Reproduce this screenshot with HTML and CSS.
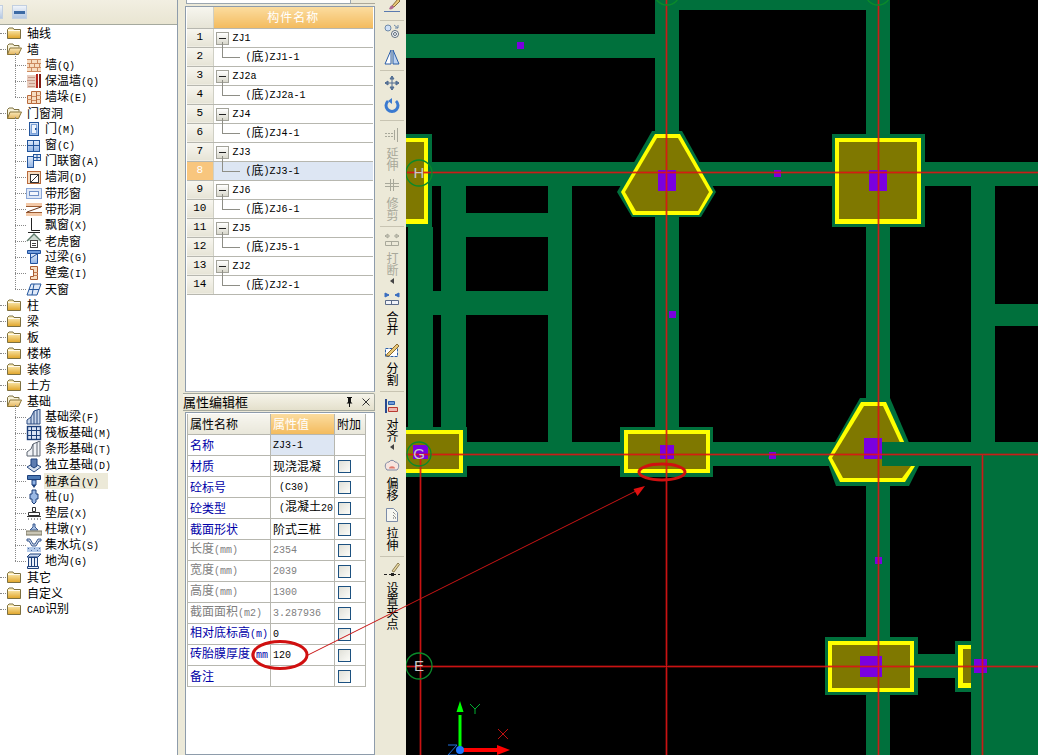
FILE: index.html
```html
<!DOCTYPE html>
<html lang="zh">
<head>
<meta charset="utf-8">
<title>属性编辑框</title>
<link rel="stylesheet" href="styles.css">
</head>
<body>
<svg class="defs" width="0" height="0" aria-hidden="true">
  <defs>
    <linearGradient id="gold" x1="0" y1="0" x2="0" y2="1"><stop offset="0" stop-color="#fff6c8"/><stop offset="1" stop-color="#e0a428"/></linearGradient>
    <linearGradient id="tan" x1="0" y1="0" x2="0" y2="1"><stop offset="0" stop-color="#fbe9b8"/><stop offset="1" stop-color="#e3b560"/></linearGradient>
    <linearGradient id="blu" x1="0" y1="0" x2="0" y2="1"><stop offset="0" stop-color="#e2ecfa"/><stop offset="1" stop-color="#8fb2e4"/></linearGradient>
    <symbol id="fc" viewBox="0 0 16 16"><path d="M1.500 4.500 3 3h4l1 1.500h6.500v9h-13z" fill="url(#gold)" stroke="#7d7040"/><path d="M2 5.500h12" stroke="#fff" stroke-width=".8"/></symbol>
    <symbol id="fo" viewBox="0 0 16 16"><path d="M1.500 13.500v-9L3 3h4l1 1.500h5v2" fill="#f8f2d8" stroke="#7d7040"/><path d="M1.500 13.500 4 7h11.500l-3 6.500z" fill="url(#tan)" stroke="#8a7538"/></symbol>
    <symbol id="wall" viewBox="0 0 16 16"><rect x="1" y="2" width="14" height="12" fill="#f7dcc0"/><path d="M1 2.500h14M1 6.500h14M1 10.500h14M1 14.500h14M5.500 2v4M11.500 2v4M3.500 6v4M8.500 6v4M13.500 6v4M5.500 10v4M11.500 10v4" stroke="#cc8a60" fill="none"/></symbol>
    <symbol id="ins" viewBox="0 0 16 16"><rect x="1" y="2" width="9" height="13" fill="#e8cdbf"/><path d="M2 4.500h7M1 7.500h8M3 10.500h6M2 13.500h7" stroke="#c89a88"/><rect x="10" y="1" width="2" height="14" fill="#b5231c"/><rect x="13" y="1" width="2" height="14" fill="#7c1c14"/></symbol>
    <symbol id="pier" viewBox="0 0 16 16"><path d="M1.500 6.500h4v8h-4zM5.500 2.500h5v12h-5zM10.500 2.500h4v12h-4z" fill="#f7dcc0" stroke="#b86a3c"/><path d="M1 10.500h5M6 7.500h4M6 11.500h4M11 6.500h4M11 10.500h4" stroke="#cc8a60"/></symbol>
    <symbol id="door" viewBox="0 0 16 16"><rect x="3.500" y="1.500" width="9" height="13" fill="url(#blu)" stroke="#23559c"/><rect x="5.500" y="3.500" width="5" height="9" fill="#eef4fc" stroke="#7ea3d8"/><rect x="9" y="7" width="1.500" height="2" fill="#23559c"/></symbol>
    <symbol id="win" viewBox="0 0 16 16"><rect x="1.500" y="3.500" width="12" height="11" fill="url(#blu)" stroke="#23559c"/><path d="M7.500 3.500v11M1.500 8.500h12" stroke="#23559c"/></symbol>
    <symbol id="dw" viewBox="0 0 16 16"><rect x="1.500" y="3.500" width="6" height="11" fill="url(#blu)" stroke="#23559c"/><rect x="7.500" y="1.500" width="7" height="6" fill="#dfe9f8" stroke="#23559c"/><path d="M11 1.500v6M7.500 4.500h7" stroke="#23559c"/></symbol>
    <symbol id="hole" viewBox="0 0 16 16"><rect x="1.500" y="2.500" width="13" height="12" fill="#f7dcc0" stroke="#b86a3c"/><rect x="4.500" y="5.500" width="8" height="8" fill="#fff" stroke="#333"/><path d="m4.500 13.500 8-8" stroke="#333"/></symbol>
    <symbol id="swin" viewBox="0 0 16 16"><rect x=".5" y="3.500" width="15" height="10" fill="#dfe8f6" stroke="#8aa6d6"/><rect x="3.500" y="6.500" width="9" height="4" fill="#f3f6fc" stroke="#6f8fc6"/></symbol>
    <symbol id="shole" viewBox="0 0 16 16"><rect x="0" y="2" width="16" height="3" fill="#f3c9a8"/><rect x="0" y="12" width="16" height="3" fill="#f3c9a8"/><path d="M0 5.500h16M0 11.500h16" stroke="#9c5a30"/><path d="m1 11 14-5" stroke="#6c3a20"/></symbol>
    <symbol id="bay" viewBox="0 0 16 16"><path d="M5.500 1v12.500H14M2 15.500h12" stroke="#222" fill="none"/></symbol>
    <symbol id="dorm" viewBox="0 0 16 16"><path d="M1 8 8 1l7 7" fill="#cfdbd2" stroke="#5d7a6a" stroke-width="1.300"/><rect x="4.500" y="7.500" width="7" height="7" fill="#fff" stroke="#444"/><path d="M6 10.500h4M6 12.500h4" stroke="#444"/></symbol>
    <symbol id="lint" viewBox="0 0 16 16"><path d="M1.500 1.500h13v3h-13z" fill="#6f9bdc" stroke="#1f4f9c"/><path d="M4.500 4.500h7v10h-7z" fill="url(#blu)" stroke="#1f4f9c"/><path d="m5 9 6-4" stroke="#1f4f9c"/></symbol>
    <symbol id="nich" viewBox="0 0 16 16"><path d="M4.500 1.500h7v13h-7v-3h3v-7h-3z" fill="#f7dcc0" stroke="#a85a30"/><path d="M8 7.500h4M8 10.500h4" stroke="#c47a50"/></symbol>
    <symbol id="skyl" viewBox="0 0 16 16"><path d="M5 3h10l-4 11H1z" fill="#dfe9f8" stroke="#23559c"/><path d="M8 3 6 14M3 8.500h10" stroke="#23559c"/></symbol>
    <symbol id="fb" viewBox="0 0 16 16"><path d="M1 15v-4l4-3 3-6 6-2v15z" fill="#c8d6ea" stroke="#2a4a80"/><path d="M8 2v13M5 8v7M11 1v14" stroke="#2a4a80"/></symbol>
    <symbol id="raft" viewBox="0 0 16 16"><rect x="1.500" y="1.500" width="13" height="13" fill="#d9e4f5" stroke="#1c3f7a" stroke-width="1.400"/><path d="M1 5.500h14M1 10.500h14M5.500 1v14M10.500 1v14" stroke="#1c3f7a"/></symbol>
    <symbol id="sf" viewBox="0 0 16 16"><path d="M1 15v-4l4-3 2-5 7-3v15z" fill="#f1f3f6" stroke="#5c6570"/><path d="M7 3v12M11 1v14" stroke="#5c6570"/></symbol>
    <symbol id="ind" viewBox="0 0 16 16"><path d="M1 10 8 6l7 4-7 5z" fill="#d8e2f0" stroke="#2a4a80"/><path d="M5 2h6v7l-3 2-3-2z" fill="#5d7cb0" stroke="#1c3f7a"/></symbol>
    <symbol id="cap" viewBox="0 0 16 16"><path d="M1.500 2.500h13v4h-13z" fill="#4b79b4" stroke="#1c3f7a"/><path d="M6 7h4v5H6z" fill="#8fb2e4" stroke="#1c3f7a"/><path d="m6 12 2 3 2-3z" fill="#1c3f7a"/></symbol>
    <symbol id="pile" viewBox="0 0 16 16"><path d="M6 1h4v4h2v5h-2v3l-2 2-2-2v-3H4V5h2z" fill="#9ab8e4" stroke="#1c3f7a"/></symbol>
    <symbol id="pad" viewBox="0 0 16 16"><path d="M6.500 2.500h3v4h-3zM2.500 7.500h11v3h-11z" fill="#fff" stroke="#333"/><path d="M1 11.500h14M2 14h1M5 14h1M8 14h1M11 14h1M14 14h1" stroke="#333"/></symbol>
    <symbol id="pb" viewBox="0 0 16 16"><path d="M7 3h2v3l3 3H4l3-3z" fill="#a8c0e4" stroke="#3a5a90"/><rect y="10" width="16" height="4" fill="#c9c5b4" stroke="#77735f"/></symbol>
    <symbol id="pit" viewBox="0 0 16 16"><path d="M1 2h3l3 5h2l3-5h3v2h-2l-3 5H6L3 4H1z" fill="#cbd5e6" stroke="#3a5a90"/><path d="M1 10h14v5H1z" fill="#b5cbea"/><path d="M2 11.500h1M5 13.500h1M8 11.500h1M11 13.500h1M13 11.500h1" stroke="#4a6aa0"/></symbol>
    <symbol id="tr" viewBox="0 0 16 16"><path d="M1 4 4 1h11l-3 3z" fill="#c9d8ee" stroke="#1c3f7a"/><path d="M2.500 4.500h9v9h-9zM1.500 13.500h11v2h-11z" fill="#e8eef8" stroke="#1c3f7a"/><path d="M5.500 4v9M8.500 4v9" stroke="#1c3f7a"/></symbol>
  </defs>
</svg>

<div class="app">
  <aside class="nav">
    <div class="nav-bar"><span class="nav-btn nav-btn-cut"></span><span class="nav-btn"><i></i></span></div>
    <ul class="tree">
      <li class="row root"><svg class="ic"><use href="#fc"/></svg><span>轴线</span></li>
      <li class="row root"><svg class="ic"><use href="#fo"/></svg><span>墙</span></li>
      <li class="kids k3">
        <div class="row kid"><svg class="ic"><use href="#wall"/></svg><span>墙<b>(Q)</b></span></div>
        <div class="row kid"><svg class="ic"><use href="#ins"/></svg><span>保温墙<b>(Q)</b></span></div>
        <div class="row kid"><svg class="ic"><use href="#pier"/></svg><span>墙垛<b>(E)</b></span></div>
      </li>
      <li class="row root"><svg class="ic"><use href="#fo"/></svg><span>门窗洞</span></li>
      <li class="kids k11">
        <div class="row kid"><svg class="ic"><use href="#door"/></svg><span>门<b>(M)</b></span></div>
        <div class="row kid"><svg class="ic"><use href="#win"/></svg><span>窗<b>(C)</b></span></div>
        <div class="row kid"><svg class="ic"><use href="#dw"/></svg><span>门联窗<b>(A)</b></span></div>
        <div class="row kid"><svg class="ic"><use href="#hole"/></svg><span>墙洞<b>(D)</b></span></div>
        <div class="row kid"><svg class="ic"><use href="#swin"/></svg><span>带形窗</span></div>
        <div class="row kid"><svg class="ic"><use href="#shole"/></svg><span>带形洞</span></div>
        <div class="row kid"><svg class="ic"><use href="#bay"/></svg><span>飘窗<b>(X)</b></span></div>
        <div class="row kid"><svg class="ic"><use href="#dorm"/></svg><span>老虎窗</span></div>
        <div class="row kid"><svg class="ic"><use href="#lint"/></svg><span>过梁<b>(G)</b></span></div>
        <div class="row kid"><svg class="ic"><use href="#nich"/></svg><span>壁龛<b>(I)</b></span></div>
        <div class="row kid"><svg class="ic"><use href="#skyl"/></svg><span>天窗</span></div>
      </li>
      <li class="row root"><svg class="ic"><use href="#fc"/></svg><span>柱</span></li>
      <li class="row root"><svg class="ic"><use href="#fc"/></svg><span>梁</span></li>
      <li class="row root"><svg class="ic"><use href="#fc"/></svg><span>板</span></li>
      <li class="row root"><svg class="ic"><use href="#fc"/></svg><span>楼梯</span></li>
      <li class="row root"><svg class="ic"><use href="#fc"/></svg><span>装修</span></li>
      <li class="row root"><svg class="ic"><use href="#fc"/></svg><span>土方</span></li>
      <li class="row root"><svg class="ic"><use href="#fo"/></svg><span>基础</span></li>
      <li class="kids k10">
        <div class="row kid"><svg class="ic"><use href="#fb"/></svg><span>基础梁<b>(F)</b></span></div>
        <div class="row kid"><svg class="ic"><use href="#raft"/></svg><span>筏板基础<b>(M)</b></span></div>
        <div class="row kid"><svg class="ic"><use href="#sf"/></svg><span>条形基础<b>(T)</b></span></div>
        <div class="row kid"><svg class="ic"><use href="#ind"/></svg><span>独立基础<b>(D)</b></span></div>
        <div class="row kid"><svg class="ic"><use href="#cap"/></svg><span class="hot">桩承台<b>(V)</b></span></div>
        <div class="row kid"><svg class="ic"><use href="#pile"/></svg><span>桩<b>(U)</b></span></div>
        <div class="row kid"><svg class="ic"><use href="#pad"/></svg><span>垫层<b>(X)</b></span></div>
        <div class="row kid"><svg class="ic"><use href="#pb"/></svg><span>柱墩<b>(Y)</b></span></div>
        <div class="row kid"><svg class="ic"><use href="#pit"/></svg><span>集水坑<b>(S)</b></span></div>
        <div class="row kid"><svg class="ic"><use href="#tr"/></svg><span>地沟<b>(G)</b></span></div>
      </li>
      <li class="row root"><svg class="ic"><use href="#fc"/></svg><span>其它</span></li>
      <li class="row root"><svg class="ic"><use href="#fc"/></svg><span>自定义</span></li>
      <li class="row root"><svg class="ic"><use href="#fc"/></svg><span><b>CAD</b>识别</span></li>
    </ul>
  </aside>

  <main class="mid">
    <div class="search"><span class="search-box"></span><span class="search-btn"></span></div>
    <section class="list">
      <table class="list-table">
        <thead><tr><th class="no"></th><th class="hd">构件名称</th></tr></thead>
        <tbody>
          <tr><td class="no">1</td><td class="par"><i class="pm"></i><b>ZJ1</b></td></tr>
          <tr><td class="no">2</td><td class="chi"><b>(</b>底<b>)ZJ1-1</b></td></tr>
          <tr><td class="no">3</td><td class="par"><i class="pm"></i><b>ZJ2a</b></td></tr>
          <tr><td class="no">4</td><td class="chi"><b>(</b>底<b>)ZJ2a-1</b></td></tr>
          <tr><td class="no">5</td><td class="par"><i class="pm"></i><b>ZJ4</b></td></tr>
          <tr><td class="no">6</td><td class="chi"><b>(</b>底<b>)ZJ4-1</b></td></tr>
          <tr><td class="no">7</td><td class="par"><i class="pm"></i><b>ZJ3</b></td></tr>
          <tr class="sel"><td class="no">8</td><td class="chi"><b>(</b>底<b>)ZJ3-1</b></td></tr>
          <tr><td class="no">9</td><td class="par"><i class="pm"></i><b>ZJ6</b></td></tr>
          <tr><td class="no">10</td><td class="chi"><b>(</b>底<b>)ZJ6-1</b></td></tr>
          <tr><td class="no">11</td><td class="par"><i class="pm"></i><b>ZJ5</b></td></tr>
          <tr><td class="no">12</td><td class="chi"><b>(</b>底<b>)ZJ5-1</b></td></tr>
          <tr><td class="no">13</td><td class="par"><i class="pm"></i><b>ZJ2</b></td></tr>
          <tr><td class="no">14</td><td class="chi"><b>(</b>底<b>)ZJ2-1</b></td></tr>
        </tbody>
      </table>
    </section>
    <header class="prop-title">
      <span>属性编辑框</span>
      <span class="title-ic"><svg width="12" height="12" viewBox="0 0 12 12"><path d="M4 1h5v1H8v4l1.500 1.500H7V11H6V7.500H3.500L5 6V2H4z" fill="#111"/></svg><svg width="12" height="12" viewBox="0 0 12 12"><path d="m2.500 2.500 7 7m0-7-7 7" stroke="#333" fill="none"/></svg></span>
    </header>
    <section class="props">
      <table class="prop-table">
        <thead><tr><th class="pn">属性名称</th><th class="pv">属性值</th><th class="pa">附加</th></tr></thead>
        <tbody>
          <tr class="blue"><td>名称</td><td class="val cur"><b>ZJ3-1</b></td><td></td></tr>
          <tr class="blue"><td>材质</td><td class="val">现浇混凝</td><td class="chk"><i></i></td></tr>
          <tr class="blue"><td>砼标号</td><td class="val"><b>&nbsp;(C30)</b></td><td class="chk"><i></i></td></tr>
          <tr class="blue"><td>砼类型</td><td class="val"><b>&nbsp;(</b>混凝土<b>20</b></td><td class="chk"><i></i></td></tr>
          <tr class="blue"><td>截面形状</td><td class="val">阶式三桩</td><td class="chk"><i></i></td></tr>
          <tr class="off"><td>长度<b>(mm)</b></td><td class="val"><b>2354</b></td><td class="chk"><i></i></td></tr>
          <tr class="off"><td>宽度<b>(mm)</b></td><td class="val"><b>2039</b></td><td class="chk"><i></i></td></tr>
          <tr class="off"><td>高度<b>(mm)</b></td><td class="val"><b>1300</b></td><td class="chk"><i></i></td></tr>
          <tr class="off"><td>截面面积<b>(m2)</b></td><td class="val"><b>3.287936</b></td><td class="chk"><i></i></td></tr>
          <tr class="blue"><td>相对底标高<b>(m)</b></td><td class="val"><b>0</b></td><td class="chk"><i></i></td></tr>
          <tr class="blue"><td>砖胎膜厚度<b>(mm</b></td><td class="val"><b>120</b></td><td class="chk"><i></i></td></tr>
          <tr class="blue"><td>备注</td><td class="val"></td><td class="chk"><i></i></td></tr>
        </tbody>
      </table>
    </section>
  </main>

  <nav class="tools">
    <div class="tool first"><svg class="ti" viewBox="0 0 16 16"><path d="m8 9 6-7 2 2-6 6z" fill="#e8c878" stroke="#8a6a30"/><path d="M6 10c1-2 3-2 4 0-1 2-3 3-5 2z" fill="#b06a90"/><path d="M0 14.500h16" stroke="#5a7ab0"/></svg></div>
    <hr class="sep">
    <div class="tool"><svg class="ti" viewBox="0 0 16 16"><circle cx="4" cy="5" r="3" fill="#cfe0f6" stroke="#6f8aa8"/><circle cx="11" cy="11" r="3.500" fill="#fff" stroke="#5a6a78"/><circle cx="11" cy="11" r="1.500" fill="none" stroke="#5a6a78"/><path d="m10 2 4 3M14 2v3h-3" stroke="#6f8aa8" fill="none"/></svg></div>
    <div class="tool mt10"><svg class="ti" viewBox="0 0 16 16"><path d="M7 1v14H1z" fill="#fff" stroke="#2a5ea8"/><path d="M9 1v14h6z" fill="#bcd2ee" stroke="#2a5ea8"/></svg></div>
    <hr class="sep">
    <div class="tool mt2"><svg class="ti" viewBox="0 0 16 16"><path d="M8 1v14M1 8h14M8 1 6 4h4zM8 15l-2-3h4zM1 8l3-2v4zM15 8l-3-2v4z" fill="#6f8aa8" stroke="#4e6a90"/></svg></div>
    <div class="tool mt6 mb2"><svg class="ti" viewBox="0 0 16 16"><path d="M4 4a6 6 0 1 0 8 0" fill="none" stroke="#3a7ad0" stroke-width="3"/><path d="M8 1v6l-4-3z" fill="#3a7ad0"/></svg></div>
    <hr class="sep">
    <div class="tool mt4 dis"><svg class="ti" viewBox="0 0 16 16"><path d="M13.500 1v14M10.500 3v10M1 6.500h2M1 9.500h2M4 6.500h2M4 9.500h2M7 6.500h2M7 9.500h2" stroke="#a8a89a" fill="none"/></svg><span class="vt">延伸</span></div>
    <div class="tool mt6 dis"><svg class="ti" viewBox="0 0 16 16"><path d="M6.500 2v12M9.500 2v12M1 6.500h14M1 9.500h14" stroke="#a8a89a" fill="none"/></svg><span class="vt">修剪</span></div>
    <hr class="sep">
    <div class="tool mt3 dis"><svg class="ti" viewBox="0 0 16 16"><path d="M1 4l3-2v4zM1 4h5M15 4l-3-2v4zM15 4h-5M1.500 9.500h13v4h-13zM7.500 9.500v4" stroke="#a8a89a" fill="none"/></svg><span class="vt">打断</span><span class="arrow"></span></div>
    <div class="tool mt7"><svg class="ti" viewBox="0 0 16 16"><path d="M1 2l4 2-4 2zM15 2l-4 2 4 2zM5 4H1M11 4h4" fill="#3a6ec0" stroke="#3a6ec0"/><path d="M1.500 9.500h13v4h-13zM7.500 9.500v4" fill="#f0f2f8" stroke="#5a6a88"/></svg><span class="vt">合并</span></div>
    <div class="tool mt7"><svg class="ti" viewBox="0 0 16 16"><path d="M1.500 6.500h12v8h-12z" fill="#fff" stroke="#2a5ea8" stroke-dasharray="3 1"/><path d="m3 12 10-10 2 2L5 14H2z" fill="#e8c878" stroke="#8a6a30"/></svg><span class="vt">分割</span></div>
    <hr class="sep">
    <div class="tool mt4"><svg class="ti" viewBox="0 0 16 16"><path d="M2 1v14" stroke="#2a4a90" stroke-width="2"/><path d="M4.500 3.500h6v3h-6z" fill="#6f9ad8" stroke="#2a5ea8"/><path d="M4.500 9.500h9v4h-9z" fill="#f0b8b0" stroke="#b83a30"/></svg><span class="vt">对齐</span><span class="arrow"></span></div>
    <div class="tool mt7"><svg class="ti" viewBox="0 0 16 16"><path d="M5 5a3.500 3.500 0 0 1 6 0c4 0 5 5 2 8H3C0 10 1 5 5 5z" fill="#f7e4de" stroke="#808aa4"/><path d="M5 11.500c0-3 6-3 6 0z" fill="#e0786a"/></svg><span class="vt">偏移</span></div>
    <div class="tool mt6"><svg class="ti" viewBox="0 0 16 16"><path d="M2.500 1.500h7l4 4v9h-11z" fill="#f6f6f0" stroke="#7c8ca8"/><path d="m9 5 3 3M9 8l3 3M9 11h3" stroke="#5a5a5a" stroke-dasharray="1 1"/></svg><span class="vt">拉伸</span></div>
    <hr class="sep">
    <div class="tool mt3"><svg class="ti" viewBox="0 0 16 16"><path d="m8 9 6-8 1.500 1.500L10 10z" fill="#e8d8a0" stroke="#8a7a50"/><path d="M0 12.500h3M5 12.500h2M10 12.500h2M14 12.500h2" stroke="#222"/><rect x="7" y="11" width="3" height="3" fill="#222"/></svg><span class="vt">设置夹点</span></div>
  </nav>

  <div class="canvas">
    <svg class="draw" viewBox="406 0 632 755" width="632" height="755">
      <g class="beam">
        <rect x="406" y="34" width="249" height="24"/>
        <rect x="655" y="0" width="235" height="10"/>
        <rect x="655" y="0" width="24" height="475"/>
        <rect x="866" y="0" width="24" height="755"/>
        <rect x="432" y="162" width="606" height="24"/>
        <rect x="408" y="227" width="25" height="203"/>
        <rect x="441" y="186" width="25" height="244"/>
        <rect x="548" y="186" width="24" height="256"/>
        <rect x="466" y="213" width="82" height="24"/>
        <rect x="433" y="291" width="115" height="24"/>
        <rect x="971" y="186" width="24" height="569"/>
        <rect x="995" y="304" width="43" height="22"/>
        <rect x="406" y="442" width="632" height="24"/>
        <rect x="971" y="466" width="67" height="289"/>
        <rect x="918" y="654" width="53" height="24"/>
      </g>

      <g>
        <rect class="g" x="406" y="134" width="26" height="93"/><rect class="y" x="406" y="138" width="22" height="86"/><rect class="o" x="406" y="142" width="18" height="77"/>
        <path class="g" d="M652 131h30l34 61-15 25h-69l-15-25z"/><path class="y" d="M655 134h25l33 58-14 23h-66l-12-23z"/><path class="o" d="M657 138h21l31 54-11 19h-62l-11-19z"/><rect class="p" x="658" y="170" width="18" height="21"/>
        <rect class="g" x="832" y="134" width="93" height="93"/><rect class="y" x="835" y="138" width="86" height="86"/><rect class="o" x="839" y="142" width="78" height="77"/><rect class="p" x="869" y="170" width="18" height="21"/>
        <rect class="g" x="406" y="427" width="61" height="50"/><rect class="y" x="406" y="430" width="57" height="43"/><rect class="o" x="406" y="434" width="53" height="35"/><rect class="p" x="413" y="445" width="15" height="14"/>
        <rect class="g" x="620" y="427" width="93" height="50"/><rect class="y" x="624" y="430" width="86" height="43"/><rect class="o" x="628" y="434" width="78" height="35"/><rect class="p" x="660" y="445" width="14" height="14"/>
        <path class="g" d="M860 398h30l29 68-10 20h-73l-10-28z"/><path class="y" d="M861 402h25l29 64-10 16h-65l-12-24z"/><path class="o" d="M864 406h19l28 60-9 12h-59l-11-20z"/><rect class="p" x="864" y="438" width="18" height="21"/>
        <rect class="g" x="882" y="442" width="40" height="24"/>
        <rect class="g" x="825" y="637" width="93" height="58"/><rect class="y" x="828" y="641" width="86" height="51"/><rect class="o" x="832" y="645" width="78" height="43"/><rect class="p" x="860" y="656" width="22" height="21"/>
        <rect class="g" x="955" y="641" width="16" height="51"/><rect class="y" x="958" y="645" width="13" height="43"/><rect class="o" x="963" y="649" width="8" height="34"/>
        <rect class="p" x="974" y="659" width="13" height="14"/>
        <rect class="p" x="517" y="42" width="7" height="7"/><rect class="p" x="774" y="170" width="7" height="7"/><rect class="p" x="669" y="311" width="7" height="7"/><rect class="p" x="769" y="452" width="7" height="7"/><rect class="p" x="875" y="557" width="7" height="7"/>
      </g>

      <path class="halo" d="M406 172.500h632M406 454.500h632M406 666.500h632M666.500 0v755M878.500 0v755M420.500 455v300M982.500 455v300"/>
      <path class="axis" d="M406 172.500h632M406 454.500h632M406 666.500h632M666.500 0v755M878.500 0v755M420.500 455v300M982.500 455v300"/>
      <g class="circ">
        <circle cx="419" cy="173" r="13"/><circle cx="419" cy="454" r="12"/><circle cx="419" cy="666" r="13"/><circle cx="667" cy="-8" r="13"/><circle cx="878" cy="-8" r="13"/>
      </g>
      <g class="lab">
        <text x="419" y="178">H</text><text x="419" y="459">G</text><text x="419" y="671">E</text>
      </g>

      <path d="M460 715V749" stroke="#00ff00" stroke-width="3"/>
      <path d="M460 701l-3.500 11h7z" fill="#00ff00"/>
      <path d="M460 750h38" stroke="#ff0000" stroke-width="4"/>
      <path d="M497 745l13 5-13 5z" fill="#ff0000"/>
      <circle cx="460" cy="750" r="4" fill="#1e78ff"/>
      <path d="m470 704 5 5 5-5m-5 5v5" stroke="#00b030" fill="none"/>
      <path d="m498 729 10 10m0-10-10 10" stroke="#c01010" fill="none"/>
      <path d="M448 745h9l-9 10h9" stroke="#2070e0" fill="none"/>
    </svg>
  </div>
</div>

<svg class="marks" viewBox="0 0 1038 755" width="1038" height="755" aria-hidden="true">
  <ellipse cx="280" cy="655" rx="27" ry="13.500" fill="none" stroke="#d01010" stroke-width="3"/>
  <ellipse cx="662" cy="472" rx="23" ry="8" fill="none" stroke="#d01010" stroke-width="3"/>
  <path d="M308 655 640 489" stroke="#c81414" fill="none"/>
  <path d="M645 486l-11.500 3 4 7z" fill="#e01010"/>
</svg>
</body>
</html>
```

FILE: styles.css
```css
* { box-sizing: border-box; }
html, body { margin: 0; padding: 0; }
body {
  position: relative;
  width: 1038px;
  height: 755px;
  overflow: hidden;
  background: #ece9d8;
  font: 12px/16px "Noto Sans CJK SC", "Liberation Sans", sans-serif;
  color: #000;
}
b { font: 10px/16px "Liberation Mono", monospace; }
.defs { position: absolute; }
.app { display: flex; height: 755px; }

/* left tree */
.nav { width: 178px; flex: none; display: flex; flex-direction: column; background: #fff; border-right: 1px solid #8e9cab; }
.nav-bar { height: 25px; flex: none; display: flex; gap: 9px; padding-top: 5px; background: linear-gradient(#f2efe2, #e9e5d2); border-bottom: 1px solid #a5a99e; }
.nav-btn { width: 15px; height: 14px; display: flex; align-items: center; justify-content: center; background: linear-gradient(#f0f4fa, #b4c8e2); border: 1px solid #c2cfe0; }
.nav-btn i { width: 11px; height: 3px; background: #3c6aa4; }
.nav-btn-cut { width: 3px; border-left: 0; }
.tree { list-style: none; margin: 0; padding: 0; }
.row { position: relative; display: flex; align-items: center; height: 16px; }
.root { padding-left: 6px; gap: 5px; }
.root::before { content: ""; position: absolute; left: 0; top: 8px; width: 6px; border-top: 1px dotted #888; }
.kid { padding-left: 26px; gap: 3px; }
.kid::before { content: ""; position: absolute; left: 15px; top: 8px; width: 11px; border-top: 1px dotted #888; }
.kids { position: relative; }
.kids::before { content: ""; position: absolute; left: 15px; top: -4px; border-left: 1px dotted #888; }
.k3::before { height: 44px; }
.k11::before { height: 172px; }
.k10::before { height: 156px; }
.ic { width: 16px; height: 16px; flex: none; }
.row > span { padding-right: 1px; white-space: nowrap; }
.hot { background: #ece9d8; padding-right: 9px !important; height: 16px; margin-left: -1px; padding-left: 1px; }

/* middle column */
.mid { width: 190px; margin-left: 7px; flex: none; display: flex; flex-direction: column; }
.search { height: 6px; flex: none; display: flex; }
.search-box { width: 165px; height: 4px; margin-left: 1px; background: #fff; border: 1px solid #9aa6b0; border-top: 0; }
.search-btn { flex: 1; height: 4px; border-bottom: 1px solid #aca899; }
.list { height: 386px; flex: none; background: #fff; border: 1px solid #8e9cab; border-bottom-color: #b0b8c0; padding: 0 1px; }
.list-table, .prop-table { border-collapse: collapse; table-layout: fixed; }
.list-table { width: 186px; }
.list-table th, .list-table td { height: 19px; padding: 0; border-bottom: 1px solid #b7b7af; font-weight: normal; line-height: 13px; }
.list-table th { height: 21px; }
.list-table td b { line-height: 13px; vertical-align: middle; }
.list-table .no { width: 26px; text-align: center; border-right: 1px solid #cfcfc4; background: linear-gradient(#f7f6ef, #e6e4d6); font: 11px/13px "Liberation Mono", monospace; }
.list-table .hd { font: 12px/16px "Noto Sans CJK SC", sans-serif; color: #fff; background: linear-gradient(#fbdc9f, #f3bb5e); text-align: center; letter-spacing: 1px; }
.par { position: relative; padding-left: 2px !important; }
.par b { margin-left: 4px; }
.pm { display: inline-block; position: relative; width: 13px; height: 13px; vertical-align: middle; border: 1px solid #a3a39a; background: linear-gradient(#fff, #d9d8cc); }
.pm::after { content: ""; position: absolute; left: 2px; right: 2px; top: 5px; border-top: 1px solid #222; }
.chi { position: relative; padding-left: 32px !important; }
.chi::before { content: ""; position: absolute; left: 8px; top: -6px; width: 17px; height: 15px; border-left: 1px solid #8e8e86; border-bottom: 1px solid #8e8e86; }
.sel .no { background: #f8c67e; color: #fff; }
.sel .chi { background: #dde6f3; }

.prop-title { height: 18px; margin: 1px 0 1px -2px; flex: none; display: flex; justify-content: space-between; align-items: center; padding: 0; border: 1px solid #a5a99e; border-left: 0; border-radius: 0 2px 0 0; background: linear-gradient(#f6f4ea, #e4e0cc); font-size: 13px; }
.title-ic { display: flex; gap: 5px; padding-right: 2px; }
.props { flex: 1; background: #fff; border: 1px solid #8e9cab; padding: 1px; }
.prop-table { width: 178px; }
.prop-table th, .prop-table td { height: 21px; padding: 0 2px; border: 1px solid #b7b7af; border-top: 0; font-weight: normal; text-align: left; white-space: nowrap; overflow: hidden; }
.prop-table th { height: 20px; }
.pn { width: 83px; background: linear-gradient(#f7f6ef, #e9e7da); }
.pv { width: 64px; color: #fff; background: linear-gradient(#fbdc9f, #f3bb5e); }
.pa { width: 31px; background: linear-gradient(#f7f6ef, #e9e7da); }
.blue td:first-child { color: #0000a8; }
.off td:first-child, .off .val { color: #808080; }
.val { color: #000; }
.val.cur { background: #dde6f3; }
.chk { text-align: left; padding-left: 3px !important; }
.chk i { display: block; width: 13px; height: 13px; margin-top: 1px; border: 1px solid #1c5180; background: linear-gradient(135deg, #e0e0d8, #fcfcf8); }

/* vertical toolbar */
.tools { width: 31px; flex: none; height: 632px; display: flex; flex-direction: column; align-items: center; padding-left: 3px; overflow: hidden; }
.tool { display: flex; flex-direction: column; align-items: center; width: 26px; flex: none; }
.first { margin-top: -3px; margin-bottom: 2px; }
.ti { width: 16px; height: 16px; flex: none; }
.vt { writing-mode: vertical-rl; text-orientation: upright; line-height: 14px; margin-top: 4px; font-size: 12px; }
.dis .vt { color: #a8a89a; }
.arrow { width: 0; height: 0; margin-top: 2px; border: 3px solid transparent; border-left: 0; border-right: 4px solid #444; }
.sep { width: 24px; height: 1px; flex: none; margin: 5px 0 2px; border: 0; background: #c8c4b2; }
.mt2 { margin-top: 2px; } .mt3 { margin-top: 3px; } .mt4 { margin-top: 4px; } .mt6 { margin-top: 6px; } .mt7 { margin-top: 7px; } .mt10 { margin-top: 10px; }
.mb2 { margin-bottom: 2px; }

/* drawing */
.canvas { flex: 1; background: #000; overflow: hidden; }
.draw { display: block; }
.beam rect { fill: #00703c; }
.g { fill: #00703c; } .y { fill: #ffff00; } .o { fill: #7f7800; } .p { fill: #7a00e0; }
.halo { fill: none; stroke: #c81414; stroke-opacity: .35; stroke-width: 3; }
.axis { fill: none; stroke: #e01414; stroke-opacity: .85; stroke-width: 1; }
.circ { fill: none; stroke: #0a8a2a; stroke-width: 1.300; }
.lab { fill: #c8c8c8; font: 15px "Liberation Sans", sans-serif; text-anchor: middle; }

.marks { position: absolute; left: 0; top: 0; pointer-events: none; }
```
